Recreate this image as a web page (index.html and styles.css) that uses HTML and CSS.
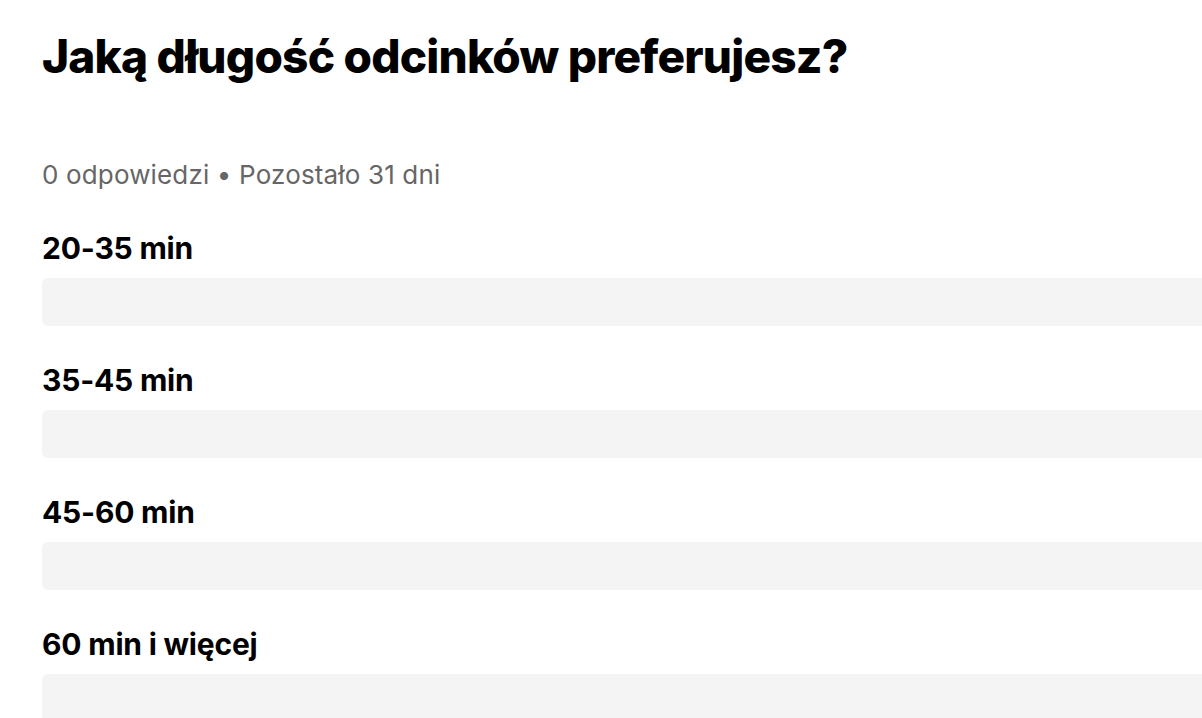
FILE: index.html
```html
<!DOCTYPE html>
<html lang="pl">
<head>
<meta charset="utf-8">
<title>Ankieta</title>
<link rel="stylesheet" href="styles.css">
</head>
<body>
<main class="poll">
  <h1 class="poll-title">Jaką długość odcinków preferujesz?</h1>
  <p class="poll-meta">0 odpowiedzi • Pozostało 31 dni</p>
  <ul class="poll-options">
    <li class="option">
      <span class="option-label">20-35 min</span>
      <div class="option-bar"></div>
    </li>
    <li class="option">
      <span class="option-label">35-45 min</span>
      <div class="option-bar"></div>
    </li>
    <li class="option">
      <span class="option-label">45-60 min</span>
      <div class="option-bar"></div>
    </li>
    <li class="option">
      <span class="option-label">60 min i więcej</span>
      <div class="option-bar"></div>
    </li>
  </ul>
</main>
</body>
</html>
```
FILE: styles.css
```css
html, body {
  margin: 0;
  padding: 0;
  background: #fff;
  overflow: hidden;
}
body {
  font-family: Inter, "Noto Sans", sans-serif;
  color: #000;
}
.poll {
  padding: 28px 0 0 42px;
  width: 1200px;
}
.poll-title {
  margin: 0;
  font-size: 46px;
  line-height: 56px;
  font-weight: 800;
  letter-spacing: -0.8px;
}
.poll-meta {
  margin: 75px 0 0;
  font-size: 26px;
  line-height: 32px;
  color: #666;
  letter-spacing: 0.15px;
}
.poll-options {
  list-style: none;
  margin: 39px 0 0;
  padding: 0;
  display: flex;
  flex-direction: column;
  gap: 36px;
}
.option {
  display: flex;
  flex-direction: column;
  gap: 12px;
}
.option-label {
  font-size: 30px;
  line-height: 36px;
  font-weight: 700;
  letter-spacing: -0.2px;
}
.option-bar {
  height: 48px;
  background: #f4f4f4;
  border-radius: 6px;
}
```
